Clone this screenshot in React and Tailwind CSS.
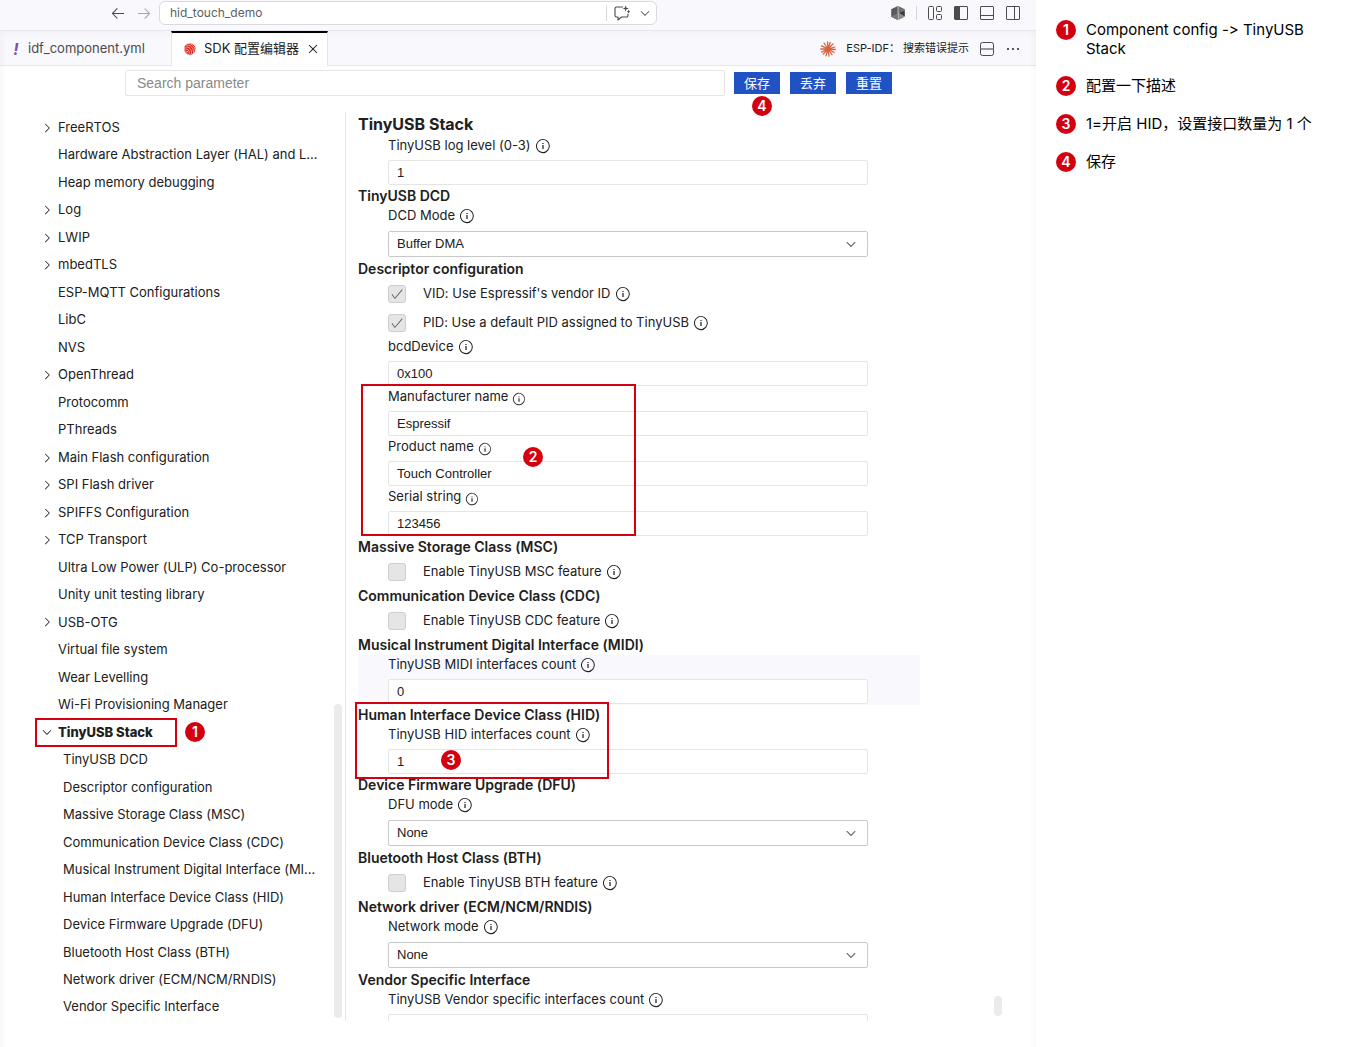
import { useState } from 'react';
import {
  VscArrowLeft,
  VscArrowRight,
  VscCheck,
  VscChevronDown,
  VscChevronRight,
  VscClose,
  VscEllipsis,
  VscInfo,
  VscLayoutPanelOff,
  VscLayoutSidebarLeft,
  VscLayoutSidebarRightOff,
} from 'react-icons/vsc';

const TREE = [
  { label: 'FreeRTOS', branch: true },
  { label: 'Hardware Abstraction Layer (HAL) and L...' },
  { label: 'Heap memory debugging' },
  { label: 'Log', branch: true },
  { label: 'LWIP', branch: true },
  { label: 'mbedTLS', branch: true },
  { label: 'ESP-MQTT Configurations' },
  { label: 'LibC' },
  { label: 'NVS' },
  { label: 'OpenThread', branch: true },
  { label: 'Protocomm' },
  { label: 'PThreads' },
  { label: 'Main Flash configuration', branch: true },
  { label: 'SPI Flash driver', branch: true },
  { label: 'SPIFFS Configuration', branch: true },
  { label: 'TCP Transport', branch: true },
  { label: 'Ultra Low Power (ULP) Co-processor' },
  { label: 'Unity unit testing library' },
  { label: 'USB-OTG', branch: true },
  { label: 'Virtual file system' },
  { label: 'Wear Levelling' },
  { label: 'Wi-Fi Provisioning Manager' },
  { label: 'TinyUSB Stack', branch: true, open: true, step: 1 },
  { label: 'TinyUSB DCD', child: true },
  { label: 'Descriptor configuration', child: true },
  { label: 'Massive Storage Class (MSC)', child: true },
  { label: 'Communication Device Class (CDC)', child: true },
  { label: 'Musical Instrument Digital Interface (MI...', child: true },
  { label: 'Human Interface Device Class (HID)', child: true },
  { label: 'Device Firmware Upgrade (DFU)', child: true },
  { label: 'Bluetooth Host Class (BTH)', child: true },
  { label: 'Network driver (ECM/NCM/RNDIS)', child: true },
  { label: 'Vendor Specific Interface', child: true },
];

const STEPS = [
  'Component config -> TinyUSB Stack',
  '配置一下描述',
  '1=开启 HID，设置接口数量为 1 个',
  '保存',
];

function Badge({ n, className = '' }) {
  return (
    <span
      className={`flex size-5 shrink-0 items-center justify-center rounded-full bg-[#d40010] text-sm leading-5 font-semibold text-white ${className}`}
    >
      {n}
    </span>
  );
}

/* Red callout frame, placed around its nearest relative parent */
function Frame({ className }) {
  return <div className={`pointer-events-none absolute z-10 border-2 border-[#d40010] ${className}`} />;
}

function EspressifIcon() {
  return (
    <svg viewBox="0 0 14 14" className="size-3.5 shrink-0" fill="none" aria-hidden="true">
      <circle cx="6.8" cy="7" r="5.8" fill="#e2231a" />
      <g stroke="#fff" strokeWidth="0.6" strokeLinecap="round">
        <path d="M5 1.400c4.200.2 7.200 3.600 7.200 7.600" />
        <path d="M3.600 3.100c4.100-.5 7.400 3.200 6.900 7.500" />
        <path d="M2.700 5c3.600-.5 6.200 2.300 5.800 6.300" />
        <path d="M2.600 7c2.300-.2 4 1.600 3.700 4.300" />
        <path d="M1.500 5.500c-.5 2.600.6 4.900 2.500 6" />
      </g>
      <circle cx="4.200" cy="9.600" r="0.700" fill="#fff" />
    </svg>
  );
}

function ClaudeIcon() {
  return (
    <svg viewBox="0 0 16 16" className="size-4 shrink-0" stroke="#d6633f" strokeWidth="1.300" strokeLinecap="round" aria-hidden="true">
      <path d="M8 8 7.500.8M8 8l2.200-6.700M8 8l5-5M8 8l6.900-2M8 8l7.300.5M8 8l6.200 3.500M8 8l4 5.700M8 8l1 7.200M8 8l-2 6.800M8 8l-4.800 5M8 8l-6.500 3M8 8H.7M8 8 1.600 4.800M8 8 4 2" />
    </svg>
  );
}

function CubeIcon() {
  return (
    <svg viewBox="0 0 16 16" className="size-4 shrink-0" aria-hidden="true">
      <path d="M7.700 1 1.200 4.200v7.600l6.500 3.200z" fill="#5a5a5a" />
      <path d="M8.300 1l6.500 3.200v1L8.300 8z" fill="#6e6e6e" />
      <path d="M14.800 5.200v6.600L8.300 8z" fill="#3c3c3c" />
      <path d="M8.300 8l6.500 3.800L8.300 15z" fill="#8a8a8a" />
      <path d="M1.200 11.800 7.700 8v7z" fill="#777" />
    </svg>
  );
}

function LayoutIcon() {
  return (
    <svg viewBox="0 0 16 16" className="size-4" fill="none" stroke="#4b4b4b" aria-hidden="true">
      <rect x="1.500" y="1.500" width="5" height="13" rx="1" />
      <rect x="9.500" y="1.500" width="5" height="5" rx="1" />
      <rect x="9.500" y="9.500" width="5" height="5" rx="1" />
    </svg>
  );
}

function ChatSparkleIcon() {
  return (
    <svg viewBox="0 0 16 16" className="size-4" fill="none" stroke="#4b4b4b" strokeWidth="1.100" strokeLinecap="round" strokeLinejoin="round" aria-hidden="true">
      <path d="M8.500 2H2.500A1.500 1.500 0 0 0 1 3.500v7A1.500 1.500 0 0 0 2.500 12H4v3l3.500-3h5a1.500 1.500 0 0 0 1.500-1.500V9" />
      <path d="M11.700.2l.8 2.500 2.500.8-2.500.8-.8 2.500-.8-2.500-2.500-.8 2.500-.8z" fill="#4b4b4b" stroke="none" />
      <path d="M14.600 5.600v2M13.600 6.600h2" strokeWidth="0.900" />
    </svg>
  );
}

function SplitIcon() {
  return (
    <svg viewBox="0 0 16 16" className="size-4" fill="none" stroke="#4b4b4b" aria-hidden="true">
      <rect x="1.500" y="1.500" width="13" height="13" rx="2" />
      <path d="M1.500 8h13" strokeWidth="1.500" stroke="#777" />
    </svg>
  );
}

function TitleBar() {
  return (
    <header className="flex h-[31px] shrink-0 items-center border-b border-[#e6e6ee] bg-[#f8f8fd] pr-[15px] pb-1 pl-[110px] text-[#4b4b4b]">
      <button aria-label="Back"><VscArrowLeft className="size-4" /></button>
      <button aria-label="Forward" className="ml-2.5 text-[#a5a5a8]"><VscArrowRight className="size-4" /></button>
      <div className="ml-[7px] flex h-6 max-w-[498px] flex-1 items-center rounded-md border border-[#d9d9e0] bg-white">
        <button className="flex-1 px-2.5 text-left text-xs text-[#606060]">hid_touch_demo</button>
        <div className="flex h-4 items-center gap-2 border-l border-[#d9d9e0] pr-1 pl-[7px]">
          <button aria-label="Chat"><ChatSparkleIcon /></button>
          <button aria-label="Chat options"><VscChevronDown className="size-3.5" /></button>
        </div>
      </div>
      <div className="ml-auto flex items-center gap-2.5">
        <button aria-label="Extension"><CubeIcon /></button>
        <span className="h-3.5 w-px bg-[#d4d4da]" />
        <button aria-label="Customize layout"><LayoutIcon /></button>
        <button aria-label="Toggle side bar"><VscLayoutSidebarLeft className="size-4" /></button>
        <button aria-label="Toggle panel"><VscLayoutPanelOff className="size-4" /></button>
        <button aria-label="Toggle secondary side bar"><VscLayoutSidebarRightOff className="size-4" /></button>
      </div>
    </header>
  );
}

function TabBar() {
  return (
    <div className="flex h-[35px] shrink-0 bg-[#f8f8fd] text-[13px]">
      <button className="flex w-[171px] items-center gap-2 border-b border-[#e6e6ee] pt-px pl-3 text-[#4b4b4b]">
        <span className="w-2 text-center text-base font-bold text-[#7e4fa8] italic">!</span>
        idf_component.yml
      </button>
      <div className="flex items-center border-x border-t-2 border-x-[#e6e6ee] border-t-black bg-white pr-1.5 pb-0.5 pl-[11px] text-[#202020]">
        <EspressifIcon />
        <button className="ml-[7px]">SDK 配置编辑器</button>
        <button aria-label="Close tab" className="ml-1.5"><VscClose className="size-4" /></button>
      </div>
      <div className="flex flex-1 items-center justify-end border-b border-[#e6e6ee] pt-px pr-[15px] text-[#202020]">
        <button aria-label="Claude"><ClaudeIcon /></button>
        <button className="mr-2.5 ml-2.5 text-[11px]">ESP-IDF： 搜索错误提示</button>
        <button aria-label="Split editor" className="mr-2.5"><SplitIcon /></button>
        <button aria-label="More actions"><VscEllipsis className="size-4" /></button>
      </div>
    </div>
  );
}

function Action({ children }) {
  return <button className="h-[22px] w-[46px] bg-[#2152c4] pt-0.5 text-[13px] text-white">{children}</button>;
}

function Toolbar() {
  return (
    <div className="flex h-[46px] shrink-0 items-start gap-[9px] pt-1 pl-[125px]">
      <input
        aria-label="Search parameter"
        placeholder="Search parameter"
        className="h-[26px] w-[600px] rounded-xs border border-[#e5e5e5] px-[11px] font-['Liberation_Sans',sans-serif] text-sm placeholder:text-[#8a8a8a]"
      />
      <div className="flex gap-2.5 pt-0.5">
        <div className="relative">
          <Action>保存</Action>
          <Badge n={4} className="absolute top-6 left-[18px]" />
        </div>
        <Action>丢弃</Action>
        <Action>重置</Action>
      </div>
    </div>
  );
}

function TreeItem({ label, branch, open, child, step }) {
  const Chevron = open ? VscChevronDown : VscChevronRight;
  return (
    <li className={`relative flex flex-1 items-center ${child ? 'pl-2' : 'pl-0'}`}>
      <span className="mr-[3px] flex w-4 shrink-0 justify-center">
        {branch && <Chevron className="size-3.5" />}
      </span>
      <a href="#" className={`whitespace-nowrap ${open ? 'font-extrabold' : ''} ${child ? '-ml-[3px]' : ''}`}>{label}</a>
      {step && (
        <>
          <Frame className="-inset-y-px -left-1 w-[142px]" />
          <Badge n={step} className="absolute top-[3px] left-[146px]" />
        </>
      )}
    </li>
  );
}

function Sidebar() {
  return (
    <nav className="relative flex w-[346px] shrink-0 border-r border-[#e5e5e5] pt-0.5 pl-[39px]">
      <ul className="flex flex-1 flex-col">
        {TREE.map((item) => <TreeItem key={item.label} {...item} />)}
      </ul>
      <div className="absolute right-[3px] bottom-[3px] h-[314px] w-2 rounded-full bg-[#ebebeb]" />
    </nav>
  );
}

function Section({ title, large, children }) {
  return (
    <section className="relative">
      <h2 className={large ? 'text-base leading-6 font-bold' : 'text-sm leading-5 font-semibold'}>{title}</h2>
      {children}
    </section>
  );
}

function FieldLabel({ id, small, children }) {
  return (
    <div className="flex h-5 items-center gap-1">
      <label htmlFor={id}>{children}</label>
      {small ? <VscInfo className="mt-1 size-3.5" /> : <VscInfo className="size-4" />}
    </div>
  );
}

function TextField({ id, label, value, small, active }) {
  return (
    <div className={`h-[50px] pl-[30px] ${active ? 'bg-[#f8f8fd]' : ''}`}>
      <FieldLabel id={id} small={small}>{label}</FieldLabel>
      <input
        id={id}
        defaultValue={value}
        className="mt-1 block h-[25px] w-full max-w-[480px] rounded-xs border border-[#e5e5e5] bg-white px-2 font-['Liberation_Sans',sans-serif]"
      />
    </div>
  );
}

function SelectField({ id, label, value }) {
  return (
    <div className="h-[53px] pl-[30px]">
      <FieldLabel id={id}>{label}</FieldLabel>
      <div className="relative mt-[5px] max-w-[480px]">
        <select
          id={id}
          className="block h-[26px] w-full appearance-none rounded-xs border border-[#c8c8c8] bg-white px-2 font-['Liberation_Sans',sans-serif]"
        >
          <option>{value}</option>
        </select>
        <VscChevronDown className="pointer-events-none absolute top-1.5 right-2.5 size-3.5 stroke-[0.5] text-[#616161]" />
      </div>
    </div>
  );
}

function CheckField({ id, label, checked: initial = false }) {
  const [checked, setChecked] = useState(initial);
  return (
    <div className="flex h-[29px] items-center pl-[30px]">
      <span className="relative mr-[17px] size-[18px]">
        <input
          id={id}
          type="checkbox"
          checked={checked}
          onChange={(e) => setChecked(e.target.checked)}
          className="block size-[18px] appearance-none rounded-[3px] border border-[#cecece] bg-[#e5e5e5]"
        />
        {checked && <VscCheck className="pointer-events-none absolute top-0.5 left-0.5 size-3.5 text-[#616161]" />}
      </span>
      <label htmlFor={id} className="mr-1">{label}</label>
      <VscInfo className="size-4" />
    </div>
  );
}

function Parameters() {
  return (
    <main className="relative flex-1 overflow-hidden pr-[116px] pl-3">
      <Section title="TinyUSB Stack" large>
        <TextField id="log-level" label="TinyUSB log level (0-3)" value="1" />
      </Section>
      <Section title="TinyUSB DCD">
        <SelectField id="dcd-mode" label="DCD Mode" value="Buffer DMA" />
      </Section>
      <Section title="Descriptor configuration">
        <CheckField id="vid" label="VID: Use Espressif's vendor ID" checked />
        <CheckField id="pid" label="PID: Use a default PID assigned to TinyUSB" checked />
        <TextField id="bcd" label="bcdDevice" value="0x100" />
        <div className="relative">
          <TextField id="manufacturer" label="Manufacturer name" value="Espressif" small />
          <TextField id="product" label="Product name" value="Touch Controller" small />
          <TextField id="serial" label="Serial string" value="123456" small />
          <Frame className="-top-[3px] bottom-px left-[3px] w-[275px]" />
          <Badge n={2} className="absolute top-[60px] left-[165px]" />
        </div>
      </Section>
      <Section title="Massive Storage Class (MSC)">
        <CheckField id="msc" label="Enable TinyUSB MSC feature" />
      </Section>
      <Section title="Communication Device Class (CDC)">
        <CheckField id="cdc" label="Enable TinyUSB CDC feature" />
      </Section>
      <Section title="Musical Instrument Digital Interface (MIDI)">
        <TextField id="midi" label="TinyUSB MIDI interfaces count" value="0" active />
      </Section>
      <Section title="Human Interface Device Class (HID)">
        <TextField id="hid" label="TinyUSB HID interfaces count" value="1" />
        <Frame className="-top-[3px] -bottom-1 -left-[3px] w-[254px]" />
        <Badge n={3} className="absolute top-[45px] left-[83px]" />
      </Section>
      <Section title="Device Firmware Upgrade (DFU)">
        <SelectField id="dfu" label="DFU mode" value="None" />
      </Section>
      <Section title="Bluetooth Host Class (BTH)">
        <CheckField id="bth" label="Enable TinyUSB BTH feature" />
      </Section>
      <Section title="Network driver (ECM/NCM/RNDIS)">
        <SelectField id="network" label="Network mode" value="None" />
      </Section>
      <Section title="Vendor Specific Interface">
        <TextField id="vendor" label="TinyUSB Vendor specific interfaces count" value="0" />
      </Section>
      <div className="absolute right-[34px] bottom-[5px] h-5 w-2 rounded-full bg-[#ebebeb]" />
    </main>
  );
}

export default function App() {
  return (
    <div className="flex h-screen overflow-hidden bg-white font-['Inter','Noto_Sans_CJK_SC',sans-serif] text-[13px] text-[#202020] [font-variant-ligatures:none]">
      <div className="relative flex min-w-0 flex-1 flex-col">
        <TitleBar />
        <TabBar />
        <Toolbar />
        <div className="flex min-h-0 flex-1 pb-[26px]">
          <Sidebar />
          <Parameters />
        </div>
        <div className="pointer-events-none absolute inset-x-0 top-[31px] -bottom-3 shadow-[inset_0_0_8px_rgba(0,0,0,0.06)]" />
      </div>
      <aside className="w-80 shrink-0 bg-white px-5 pt-5">
        <ol className="flex flex-col gap-[18px] text-[15px] leading-[19px] text-black">
          {STEPS.map((text, i) => (
            <li key={text} className="flex gap-2.5">
              <Badge n={i + 1} />
              <span className="max-w-[240px]">{text}</span>
            </li>
          ))}
        </ol>
      </aside>
    </div>
  );
}
